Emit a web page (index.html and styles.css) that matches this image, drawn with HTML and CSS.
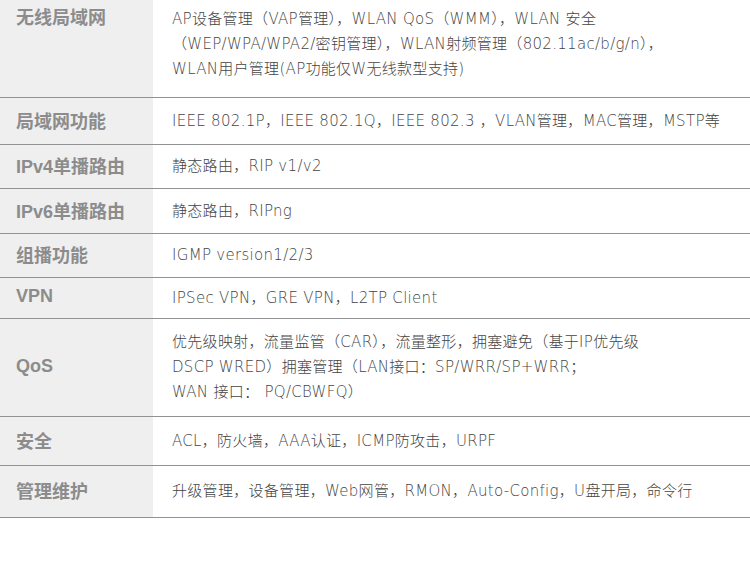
FILE: index.html
```html
<!DOCTYPE html>
<html lang="zh-CN">
<head>
<meta charset="utf-8">
<title>规格参数</title>
<link rel="stylesheet" href="styles.css">
</head>
<body>
<div class="spec">
  <div class="label top">无线局域网</div>
  <div class="value top">AP设备管理（VAP管理），WLAN QoS（WMM），WLAN 安全<br>（WEP/WPA/WPA2/密钥管理），WLAN射频管理（802.11ac/b/g/n），<br>WLAN用户管理(AP功能仅W无线款型支持)</div>

  <div class="label">局域网功能</div>
  <div class="value">IEEE 802.1P，IEEE 802.1Q，IEEE 802.3 ，VLAN管理，MAC管理，MSTP等</div>

  <div class="label">IPv4单播路由</div>
  <div class="value">静态路由，RIP v1/v2</div>

  <div class="label">IPv6单播路由</div>
  <div class="value">静态路由，RIPng</div>

  <div class="label">组播功能</div>
  <div class="value">IGMP version1/2/3</div>

  <div class="label">VPN</div>
  <div class="value">IPSec VPN，GRE VPN，L2TP Client</div>

  <div class="label">QoS</div>
  <div class="value">优先级映射，流量监管（CAR），流量整形，拥塞避免（基于IP优先级<br>DSCP WRED）拥塞管理（LAN接口：SP/WRR/SP+WRR；<br>WAN 接口： PQ/CBWFQ）</div>

  <div class="label">安全</div>
  <div class="value">ACL，防火墙，AAA认证，ICMP防攻击，URPF</div>

  <div class="label">管理维护</div>
  <div class="value">升级管理，设备管理，Web网管，RMON，Auto-Config，U盘开局，命令行</div>
</div>
</body>
</html>
```

FILE: styles.css
```css
html, body {
  margin: 0;
  padding: 0;
  background: #ffffff;
}

.spec {
  display: grid;
  grid-template-columns: 153px 1fr;
  grid-template-rows: 98px 47px 44px 45px 44px 41px 98px 49px 52px;
  width: 750px;
}

.label,
.value {
  display: flex;
  align-items: center;
  border-bottom: 1px solid #929292;
  box-sizing: border-box;
  white-space: nowrap;
}

.label {
  background: #efefef;
  padding-left: 16px;
  padding-bottom: 3px;
  font-family: "Liberation Sans", "Noto Sans CJK SC", sans-serif;
  font-weight: 700;
  font-size: 18px;
  color: #8c8c8c;
}

.value {
  padding-left: 19px;
  font-family: "DejaVu Sans", "Noto Sans CJK SC", sans-serif;
  font-weight: 200;
  font-size: 15px;
  line-height: 25px;
  letter-spacing: 0.3px;
  color: #444444;
}

.label.top,
.value.top {
  align-items: flex-start;
  padding-top: 7px;
}

.label.top {
  line-height: 25px;
  padding-top: 6px;
}
```
